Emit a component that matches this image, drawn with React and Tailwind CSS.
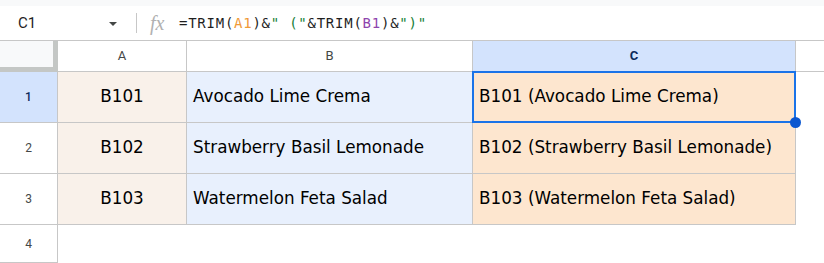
import React from 'react';

const rows = [
  { n: 1, a: 'B101', b: 'Avocado Lime Crema' },
  { n: 2, a: 'B102', b: 'Strawberry Basil Lemonade' },
  { n: 3, a: 'B103', b: 'Watermelon Feta Salad' },
];

const cellFont = { fontFamily: '"Comic Sans MS", "DejaVu Sans", sans-serif' };

export default function App() {
  return (
    <div className="w-[824px] h-[263px] overflow-hidden bg-white" style={{ fontFamily: 'Roboto, "Liberation Sans", Arial, sans-serif' }}>
      <div className="h-[6px] bg-[#f8f9fa]" />
      {/* formula bar */}
      <div className="h-[35px] flex items-center border-b border-[#c7c7c7]">
        <div className="w-[136px] flex items-center pl-[18px] pr-[18px]">
          <span className="text-[15px] text-[#1f1f1f] flex-1">C1</span>
          <svg width="10" height="6" viewBox="0 0 10 6" className="mt-[1px]">
            <path d="M1 1 L9 1 L5 5 Z" fill="#444746" />
          </svg>
        </div>
        <div className="w-px h-[20px] bg-[#c7c7c7]" />
        <span className="ml-[13px] w-[22px] text-[20px] italic text-[#b1b1b1] leading-none" style={{ fontFamily: '"Liberation Serif", serif' }}>fx</span>
        <span className="ml-[7px] text-[14px] tracking-[0.75px] text-[#1f1f1f]" style={{ fontFamily: '"DejaVu Sans Mono", "Liberation Mono", monospace' }}>
          =TRIM(<span className="text-[#f09a37]">A1</span>)&amp;<span className="text-[#188038]">" ("</span>&amp;TRIM(<span className="text-[#8e44ad]">B1</span>)&amp;<span className="text-[#188038]">")"</span>
        </span>
      </div>

      {/* grid */}
      <div className="grid grid-cols-[58px_129px_286px_323px_1fr] grid-rows-[31px_51px_51px_51px_38px]">
        <div className="bg-[#f8f9fa] border-r-[5px] border-b-[5px] border-[#c4c7c5]" />
        <div className="flex items-center justify-center text-[13px] text-[#444746] border-r border-b border-[#c7c7c7]">A</div>
        <div className="flex items-center justify-center text-[13px] text-[#444746] border-r border-b border-[#c7c7c7]">B</div>
        <div className="flex items-center justify-center text-[13px] font-bold text-[#0b2a5b] bg-[#d3e3fd] border-r border-b border-[#c7c7c7]">C</div>
        <div className="border-b border-[#c7c7c7]" />

        {rows.map((r) => (
          <React.Fragment key={r.n}>
            <div className={`flex items-center justify-center text-[12px] border-r border-b border-[#c7c7c7] ${r.n === 1 ? 'bg-[#d3e3fd] text-[#0b2a5b] font-medium' : 'text-[#444746]'}`}>{r.n}</div>
            <div className="flex items-center justify-center text-[16.8px] text-black bg-[#f9f1ea] border-r border-b border-[#c7c7c7]" style={cellFont}>{r.a}</div>
            <div className="flex items-center pl-[6px] text-[16.8px] text-black bg-[#e8f0fd] border-r border-b border-[#c7c7c7]" style={cellFont}>{r.b}</div>
            <div className={`relative flex items-center pl-[6px] text-[16.8px] text-black bg-[#fde6cf] border-r border-b border-[#c7c7c7] ${r.n === 1 ? 'z-10' : ''}`} style={cellFont}>
              {r.a} ({r.b})
              {r.n === 1 && (
                <>
                  <div className="absolute -top-px -left-px -right-px -bottom-px border-2 border-[#1a73e8]" />
                  <div className="absolute -right-[6px] -bottom-[6px] w-[11px] h-[11px] rounded-full bg-[#0b57d0]" />
                </>
              )}
            </div>
            <div />
          </React.Fragment>
        ))}

        <div className="flex items-center justify-center text-[12px] text-[#444746] border-r border-b border-[#c7c7c7]">4</div>
        <div />
        <div />
        <div />
        <div />
      </div>
    </div>
  );
}
